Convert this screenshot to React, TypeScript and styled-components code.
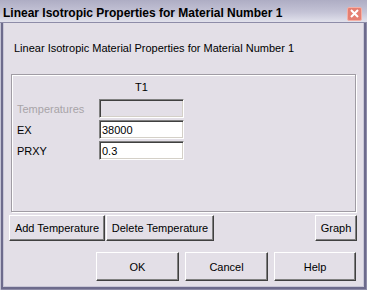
import React from 'react';
import styled, { createGlobalStyle } from 'styled-components';

const GlobalStyle = createGlobalStyle`
  html, body {
    margin: 0;
    padding: 0;
    background: #e3dfe7;
  }
  body {
    font-family: "Liberation Sans", Arial, sans-serif;
    font-size: 11px;
  }
`;

type Row = {
  label: string;
  value: string;
  disabled?: boolean;
};

const rows: Row[] = [
  { label: 'Temperatures', value: '', disabled: true },
  { label: 'EX', value: '38000' },
  { label: 'PRXY', value: '0.3' },
];

const App: React.FC = () => {
  return (
    <>
      <GlobalStyle />
      <Window>
        <TitleBar>
          <Title>Linear Isotropic Properties for Material Number 1</Title>
          <CloseButton aria-label="Close">
            <svg width="9" height="9" viewBox="0 0 9 9">
              <path d="M1 1 L8 8 M8 1 L1 8" stroke="#fff" strokeWidth="2" />
            </svg>
          </CloseButton>
        </TitleBar>
        <Client>
          <Heading>Linear Isotropic Material Properties for Material Number 1</Heading>
          <Panel>
            <Grid>
              <span />
              <ColumnHeader>T1</ColumnHeader>
              {rows.map((row) => (
                <React.Fragment key={row.label}>
                  <RowLabel $disabled={row.disabled}>{row.label}</RowLabel>
                  <Field $disabled={row.disabled}>{row.value}</Field>
                </React.Fragment>
              ))}
            </Grid>
          </Panel>
          <ToolRow>
            <Button $width={96}>Add Temperature</Button>
            <Button $width={108}>Delete Temperature</Button>
            <Spacer />
            <Button $width={42}>Graph</Button>
          </ToolRow>
          <ActionRow>
            <Button $width={83} $height={29}>OK</Button>
            <Button $width={83} $height={29}>Cancel</Button>
            <Button $width={82} $height={29}>Help</Button>
          </ActionRow>
        </Client>
      </Window>
    </>
  );
};

const Window = styled.div`
  width: 367px;
  height: 290px;
  box-sizing: border-box;
  display: flex;
  flex-direction: column;
  background: #e3dfe7;
  box-shadow:
    inset 1px 0 0 #c4c3d4,
    inset 0 -1px 0 #8e8ca8,
    inset -1px 0 0 #8e8ca8,
    inset 3px 0 0 #6d6b8c,
    inset -3px 0 0 #6d6b8c,
    inset 0 -3px 0 #6d6b8c,
    inset 4px 0 0 #c8c6d6,
    inset -4px 0 0 #c8c6d6,
    inset 0 -4px 0 #c8c6d6;
  overflow: hidden;
`;

const TitleBar = styled.div`
  height: 22px;
  flex: none;
  display: flex;
  align-items: center;
  padding: 0 5px 0 3px;
  background: linear-gradient(#aeadc4 0%, #c4c3d6 55%, #e2e2ec 100%);
  border-bottom: 1px solid #8e8ca8;
`;

const Title = styled.div`
  flex: 1;
  font-family: "Liberation Sans", Arial, sans-serif;
  font-weight: bold;
  font-size: 12px;
  color: #000;
  white-space: nowrap;
  padding-top: 3px;
`;

const CloseButton = styled.div`
  width: 15px;
  height: 14px;
  margin-top: 5px;
  box-sizing: border-box;
  display: flex;
  align-items: center;
  justify-content: center;
  background: #e57f72;
  border: 1px solid #f4b0a6;
  border-radius: 2px;
`;

const Client = styled.div`
  flex: 1;
  display: flex;
  flex-direction: column;
  padding: 0 10px 0 7px;
`;

const Heading = styled.div`
  height: 51px;
  box-sizing: border-box;
  padding: 19px 0 0 7px;
  white-space: nowrap;
  color: #000;
`;

const Panel = styled.div`
  width: 345px;
  height: 138px;
  box-sizing: border-box;
  margin-left: 4px;
  border: 1px solid #a09ca4;
  box-shadow: inset 1px 1px 0 #ffffff, 1px 1px 0 #ffffff;
`;

const Grid = styled.div`
  display: grid;
  grid-template-columns: 82px 85px;
  grid-auto-rows: 19px;
  row-gap: 2px;
  padding: 3px 0 0 5px;
  grid-template-rows: 19px;
  align-items: center;
`;

const ColumnHeader = styled.div`
  text-align: center;
  color: #000;
  margin-bottom: 2px;
`;

const RowLabel = styled.div<{ $disabled?: boolean }>`
  color: ${(p) => (p.$disabled ? '#a8a4a8' : '#000')};
  white-space: nowrap;
`;

const Field = styled.div<{ $disabled?: boolean }>`
  height: 19px;
  box-sizing: border-box;
  padding: 2px 2px 0 2px;
  background: ${(p) => (p.$disabled ? '#e3dfe7' : '#ffffff')};
  border-top: 1px solid #808080;
  border-left: 1px solid #808080;
  border-right: 1px solid #ffffff;
  border-bottom: 1px solid #ffffff;
  box-shadow: inset 1px 1px 0 #404040, inset -1px -1px 0 #d4d0c8;
  color: #000;
  line-height: 15px;
`;

const ToolRow = styled.div`
  display: flex;
  gap: 1px;
  margin-top: 3px;
  padding-left: 2px;
`;

const Spacer = styled.div`
  flex: 1;
`;

const ActionRow = styled.div`
  display: flex;
  justify-content: flex-end;
  gap: 6px;
  margin-top: 11px;
  padding-right: 1px;
`;

const Button = styled.div<{ $width: number; $height?: number }>`
  width: ${(p) => p.$width}px;
  height: ${(p) => p.$height ?? 26}px;
  box-sizing: border-box;
  display: flex;
  align-items: center;
  justify-content: center;
  background: #e3dfe7;
  color: #000;
  white-space: nowrap;
  border-top: 1px solid #ffffff;
  border-left: 1px solid #ffffff;
  border-right: 1px solid #404040;
  border-bottom: 1px solid #404040;
  box-shadow: inset -1px -1px 0 #808080;
`;

export default App;
